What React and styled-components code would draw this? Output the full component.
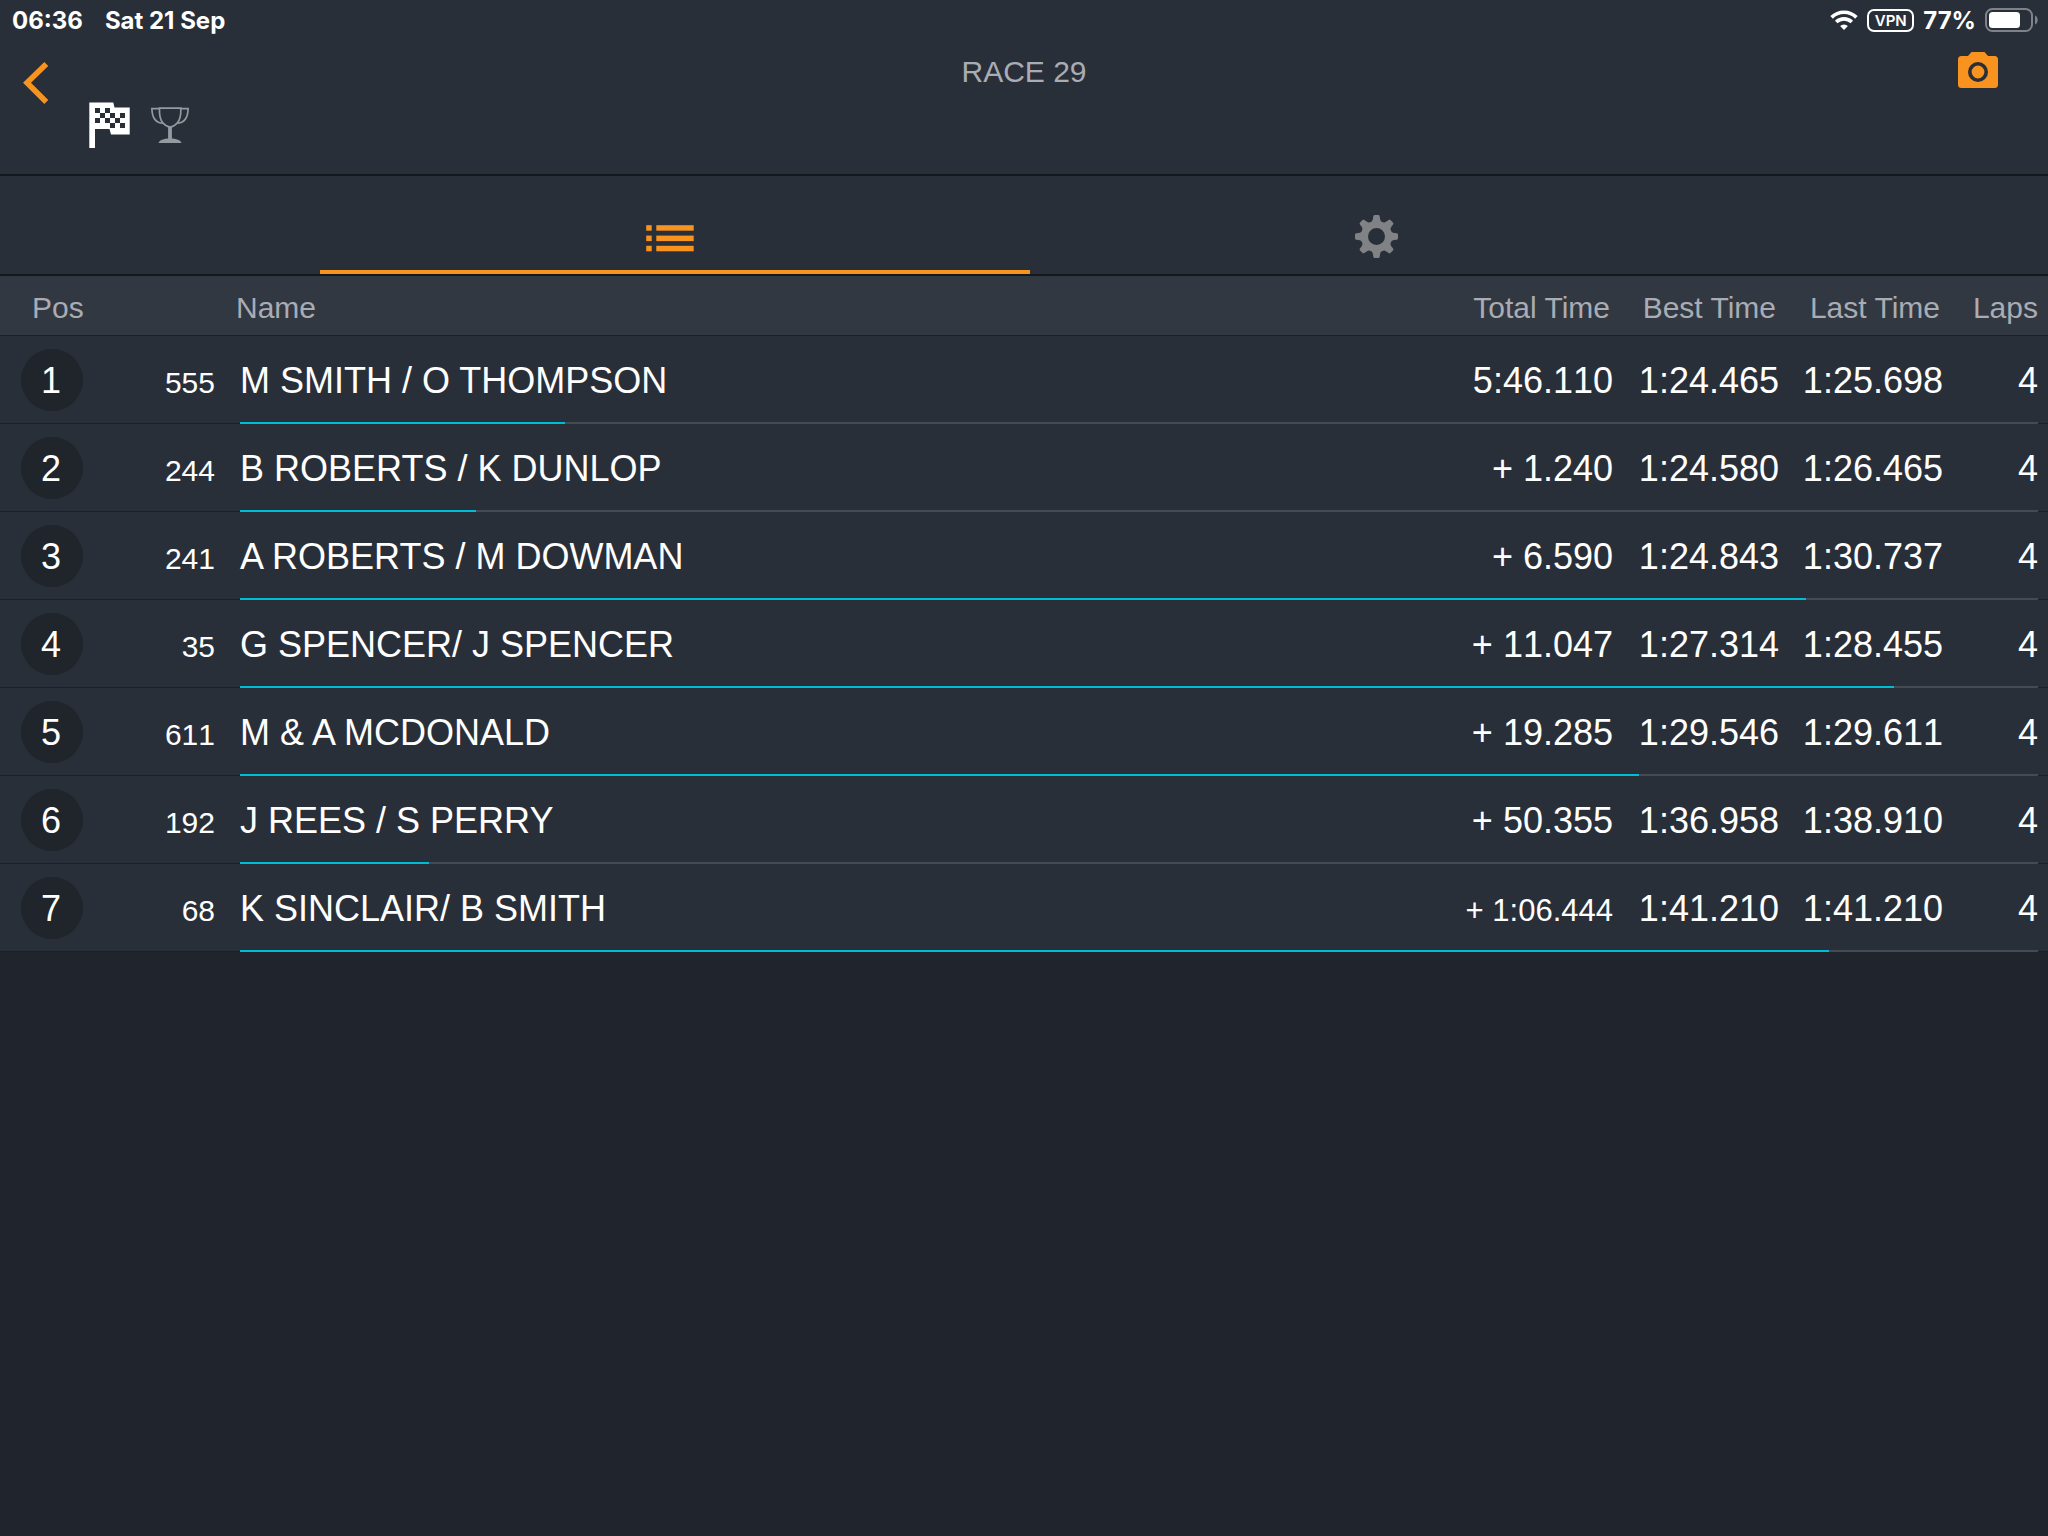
import React from "react";
import styled, { createGlobalStyle } from "styled-components";

const GlobalStyle = createGlobalStyle`
  * {
    box-sizing: border-box;
  }

  body {
    margin: 0;
    min-height: 100vh;
    background-color: #20242c;
    color: #fff;
    font-family: "Liberation Sans", Arial, sans-serif;
  }
`;

const Top = styled.header`
  background-color: #292f39;
`;

const StatusBar = styled.div`
  display: flex;
  justify-content: space-between;
  align-items: center;
  height: 40px;
  padding: 0 10px 0 12px;
  font-family: Inter, sans-serif;
  font-size: 24px;
  font-weight: 700;
`;

const StatusGroup = styled.div`
  display: flex;
  align-items: center;
  gap: ${(props) => props.$gap}px;
`;

const VpnBadge = styled.span`
  width: 47px;
  border: 2px solid #fff;
  border-radius: 7px;
  font-size: 15px;
  font-weight: 600;
  line-height: 19px;
  text-align: center;
`;

const NavBar = styled.div`
  display: grid;
  grid-template-columns: 1fr auto 1fr;
  align-items: start;
  height: 136px;
  padding: 12px 50px 0 20px;
  border-bottom: 2px solid #14171c;
`;

const NavLeft = styled.div`
  display: flex;
  align-items: flex-start;
`;

const IconButton = styled.button`
  display: flex;
  padding: 0;
  border: 0;
  background: none;
  cursor: pointer;
`;

const BackButton = styled(IconButton)`
  margin-top: 8px;
`;

const CameraButton = styled(IconButton)`
  justify-self: end;
`;

const RaceFlags = styled.div`
  display: flex;
  gap: 20px;
  margin: 50px 0 0 39px;
`;

const Title = styled.h1`
  margin: 0 0 0 30px;
  color: #a9acb3;
  font-size: 30px;
  font-weight: 400;
  line-height: 40px;
`;

const Tabs = styled.nav`
  display: grid;
  grid-template-columns: 1fr 1fr;
  height: 100px;
  padding: 0 320px;
  border-bottom: 2px solid #14171c;
`;

const Tab = styled.button`
  display: grid;
  grid-template-rows: 1fr 4px;
  justify-items: center;
  padding: 0;
  border: 0;
  background: none;
  cursor: pointer;

  svg {
    margin-top: 38px;
  }

  &::after {
    content: "";
    justify-self: stretch;
    margin-right: -6px;
    background-color: ${(props) => (props.$active ? "#f7931e" : "transparent")};
  }
`;

const Results = styled.table`
  display: block;
  background-color: #292f39;

  thead,
  tbody {
    display: block;
  }
`;

const columns = "104px 112px 1fr 200px 166px 164px 94px";

const HeadRow = styled.tr`
  display: grid;
  grid-template-columns: ${columns};
  height: 60px;
  padding: 4px 10px 0 0;
  border-bottom: 1px solid #1b1f26;
  background-color: #323842;
`;

const HeadCell = styled.th`
  padding: ${(props) => props.$pad || "0 4px 0 0"};
  color: #a9acb3;
  font-size: 30px;
  font-weight: 400;
  line-height: 56px;
  text-align: ${(props) => props.$align || "right"};
  white-space: nowrap;
`;

const Row = styled.tr`
  display: grid;
  grid-template-columns: ${columns};
  grid-template-rows: 86px 2px;
  align-items: baseline;
  padding-right: 10px;
  box-shadow: inset 0 -1px 0 #1b1f26;
`;

const Cell = styled.td`
  padding: 13px 1px 0 0;
  font-size: ${(props) => props.$size || 36}px;
  line-height: 64px;
  text-align: right;
  white-space: nowrap;
  font-kerning: none;
`;

const PosCell = styled(Cell)`
  padding-left: 21px;
`;

const NameCell = styled(Cell)`
  padding-left: 24px;
  text-align: left;
  font-kerning: auto;
`;

const LapsCell = styled(Cell)`
  padding-right: 0;
`;

const Position = styled.div`
  width: 62px;
  height: 62px;
  padding-right: 2px;
  border-radius: 50%;
  background-color: #20242b;
  text-align: center;
`;

const ProgressCell = styled.td`
  grid-column: 3 / -1;
  align-self: stretch;
  margin-left: 24px;
  padding: 0;
  background-color: #454a54;
`;

const Progress = styled.div`
  height: 2px;
  background-color: #00bcd4;
`;

const racers = [
  { number: 555, name: "M SMITH / O THOMPSON", total: "5:46.110", best: "1:24.465", last: "1:25.698", laps: 4, progress: 18.1 },
  { number: 244, name: "B ROBERTS / K DUNLOP", total: "+ 1.240", best: "1:24.580", last: "1:26.465", laps: 4, progress: 13.1 },
  { number: 241, name: "A ROBERTS / M DOWMAN", total: "+ 6.590", best: "1:24.843", last: "1:30.737", laps: 4, progress: 87.1 },
  { number: 35, name: "G SPENCER/ J SPENCER", total: "+ 11.047", best: "1:27.314", last: "1:28.455", laps: 4, progress: 92 },
  { number: 611, name: "M & A MCDONALD", total: "+ 19.285", best: "1:29.546", last: "1:29.611", laps: 4, progress: 77.8 },
  { number: 192, name: "J REES / S PERRY", total: "+ 50.355", best: "1:36.958", last: "1:38.910", laps: 4, progress: 10.5 },
  { number: 68, name: "K SINCLAIR/ B SMITH", total: "+ 1:06.444", best: "1:41.210", last: "1:41.210", laps: 4, progress: 88.4 },
];

const WifiIcon = () => (
  <svg width="28" height="20" viewBox="0 0 28 20" fill="none" stroke="#fff" strokeWidth="3.6">
    <path d="M1.6 7.4a17.6 17.6 0 0 1 24.8 0" />
    <path d="M6.2 12a11.2 11.2 0 0 1 15.6 0" />
    <path d="M14 20l-3.900-4a5.600 5.600 0 0 1 7.800 0z" fill="#fff" stroke="none" />
  </svg>
);

const BatteryIcon = () => (
  <svg width="53" height="24" viewBox="0 0 53 24">
    <rect x="1" y="1" width="46" height="22" rx="6.5" fill="none" stroke="#7f8389" strokeWidth="2" />
    <rect x="4" y="4" width="31" height="16" rx="3.5" fill="#fff" />
    <path d="M50 7.5c3.6 1.4 3.6 7.6 0 9z" fill="#7f8389" />
  </svg>
);

const BackIcon = () => (
  <svg width="30" height="46" viewBox="0 0 30 46" fill="none" stroke="#f7931e" strokeWidth="5.6">
    <path d="M26.3 4L7 22.8l19.3 19.2" />
  </svg>
);

const checks = [
  [6, 5], [16, 5],
  [11, 10], [21, 10], [31, 10],
  [6, 15], [16, 15], [26, 15],
  [21, 20], [31, 20],
];

const FlagIcon = () => (
  <svg width="42" height="46" viewBox="0 0 42 46">
    <path d="M.3.5h24l1.200 5h15.200v27H22l-1.500-5.500H6v19H.3z" fill="#fff" />
    {checks.map(([x, y]) => (
      <rect key={`${x}-${y}`} x={x} y={y + 1} width="5" height="5" fill="#292f39" />
    ))}
  </svg>
);

const TrophyIcon = () => (
  <svg width="38" height="46" viewBox="0 0 38 46" fill="none" stroke="#9599a0" strokeWidth="1.700">
    <path d="M8.500 6.200h21.300c.3 6.200-.6 11.500-3.600 14.800-2.200 2.600-4.500 3.800-7 4-2.500-.2-5-1.400-7.200-4C9 17.700 8.200 12.400 8.500 6.200z" />
    <path d="M8.500 6.700H.9c.2 8.500 3.500 14.300 11.200 14.500M29.800 6.700h7.300c-.2 8.500-3.500 14.300-11.200 14.500" />
    <path d="M19 25v12" strokeWidth="3.800" />
    <path d="M7.500 41c1-2.800 5-4.500 11.500-4.500s10.500 1.700 11.500 4.500z" fill="#9599a0" stroke="none" />
  </svg>
);

const CameraIcon = () => (
  <svg width="40" height="36" viewBox="0 0 40 36">
    <path d="M13.500 0h13l3.500 4h6.500A3.500 3.500 0 0 1 40 7.500v25a3.500 3.500 0 0 1-3.500 3.500h-33A3.500 3.500 0 0 1 0 32.500v-25A3.500 3.500 0 0 1 3.500 4h6.500z" fill="#f7931e" />
    <circle cx="20" cy="20" r="8.200" fill="none" stroke="#292f39" strokeWidth="3.600" />
  </svg>
);

const ListIcon = () => (
  <svg width="52" height="44" viewBox="0 0 52 44" fill="#f7931e">
    {[11.2, 21.6, 31.8].map((y) => (
      <g key={y}>
        <rect x="0.200" y={y} width="5.500" height="5.500" />
        <rect x="10.300" y={y} width="37.400" height="5.500" />
      </g>
    ))}
  </svg>
);

const GearIcon = () => (
  <svg width="44" height="44" viewBox="-22.500 -22.500 44 44" fill="#808285">
    <circle r="12" fill="none" stroke="#808285" strokeWidth="7" />
    {[0, 45, 90, 135, 180, 225, 270, 315].map((angle) => (
      <path
        key={angle}
        d="M-6.500-13.500C-4.500-15-3.800-16-3.500-18l.3-2.300q.2-1.200 1.400-1.200h3.600q1.200 0 1.400 1.200l.3 2.300c.3 2 1 3 3 4.500z"
        transform={`rotate(${angle})`}
      />
    ))}
  </svg>
);

function App() {
  return (
    <>
      <GlobalStyle />
      <Top>
        <StatusBar>
          <StatusGroup $gap={22}>
            <span>06:36</span>
            <span>Sat 21 Sep</span>
          </StatusGroup>
          <StatusGroup $gap={9}>
            <WifiIcon />
            <VpnBadge>VPN</VpnBadge>
            <span>77%</span>
            <BatteryIcon />
          </StatusGroup>
        </StatusBar>
        <NavBar>
          <NavLeft>
            <BackButton type="button" aria-label="Back">
              <BackIcon />
            </BackButton>
            <RaceFlags>
              <FlagIcon />
              <TrophyIcon />
            </RaceFlags>
          </NavLeft>
          <Title>RACE 29</Title>
          <CameraButton type="button" aria-label="Camera">
            <CameraIcon />
          </CameraButton>
        </NavBar>
        <Tabs>
          <Tab type="button" aria-label="Results" $active>
            <ListIcon />
          </Tab>
          <Tab type="button" aria-label="Settings">
            <GearIcon />
          </Tab>
        </Tabs>
      </Top>
      <Results>
        <thead>
          <HeadRow>
            <HeadCell $align="left" $pad="0 0 0 32px">Pos</HeadCell>
            <HeadCell aria-label="Number" />
            <HeadCell $align="left" $pad="0 0 0 20px">Name</HeadCell>
            <HeadCell>Total Time</HeadCell>
            <HeadCell>Best Time</HeadCell>
            <HeadCell>Last Time</HeadCell>
            <HeadCell $pad="0">Laps</HeadCell>
          </HeadRow>
        </thead>
        <tbody>
          {racers.map((racer, index) => (
            <Row key={racer.number}>
              <PosCell>
                <Position>{index + 1}</Position>
              </PosCell>
              <Cell $size={30}>{racer.number}</Cell>
              <NameCell>{racer.name}</NameCell>
              <Cell $size={racer.total.length > 8 ? 31 : 36}>{racer.total}</Cell>
              <Cell>{racer.best}</Cell>
              <Cell>{racer.last}</Cell>
              <LapsCell>{racer.laps}</LapsCell>
              <ProgressCell>
                <Progress style={{ width: `${racer.progress}%` }} />
              </ProgressCell>
            </Row>
          ))}
        </tbody>
      </Results>
    </>
  );
}

export default App;
